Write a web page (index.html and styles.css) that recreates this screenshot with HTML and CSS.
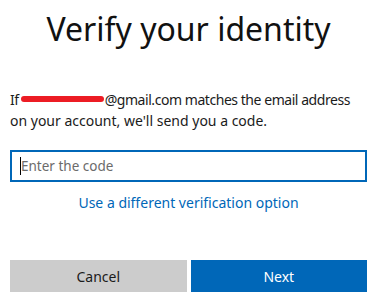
FILE: index.html
```html
<!DOCTYPE html>
<html>
<head>
<meta charset="utf-8">
<link rel="stylesheet" href="styles.css">
</head>
<body>
<main class="card">
  <h1 class="title">Verify your identity</h1>
  <p class="desc">
    <span class="line line-first">If<span class="redact"></span>@gmail.com matches the email address</span>
    <span class="line">on your account, we'll send you a code.</span>
  </p>
  <div class="field"><span class="caret"></span><span class="placeholder">Enter the code</span></div>
  <a class="link" href="#">Use a different verification option</a>
  <div class="actions">
    <button class="btn btn-cancel">Cancel</button>
    <button class="btn btn-next">Next</button>
  </div>
</main>
</body>
</html>
```
FILE: styles.css
```css
html, body {
  margin: 0;
  padding: 0;
  background: #fff;
}
.card {
  padding: 0 10px;
  font-family: "Noto Sans", "Open Sans", sans-serif;
  color: #1b1b1b;
  display: flex;
  flex-direction: column;
}
.title {
  margin: 9px 0 0;
  font-size: 32px;
  line-height: 40px;
  font-weight: 400;
  text-align: center;
  color: #111;
}
.desc {
  margin: 40px 0 0;
  font-size: 14px;
  line-height: 21px;
}
.line {
  display: block;
  white-space: nowrap;
}
.line-first {
  letter-spacing: -0.45px;
}
.redact {
  display: inline-block;
  width: 83px;
  height: 6px;
  margin: 0 1px 0 2px;
  background: #ec1c24;
  border-radius: 3px;
  vertical-align: 3px;
}
.field {
  margin-top: 19px;
  height: 32px;
  box-sizing: border-box;
  border: 2px solid #0067b8;
  display: flex;
  align-items: center;
  padding-left: 8px;
  font-size: 13.5px;
}
.caret {
  width: 1px;
  height: 18px;
  background: #000;
}
.placeholder {
  color: #6b6b6b;
}
.link {
  margin-top: 10px;
  font-size: 14px;
  line-height: 21px;
  text-align: center;
  color: #0067b8;
  text-decoration: none;
}
.actions {
  margin-top: 47px;
  display: flex;
  gap: 4px;
}
.btn {
  flex: 1;
  height: 32px;
  border: none;
  font-family: inherit;
  font-size: 14px;
  padding: 0;
}
.btn-cancel {
  background: #ccc;
  color: #1b1b1b;
}
.btn-next {
  background: #0067b8;
  color: #fff;
}
```
